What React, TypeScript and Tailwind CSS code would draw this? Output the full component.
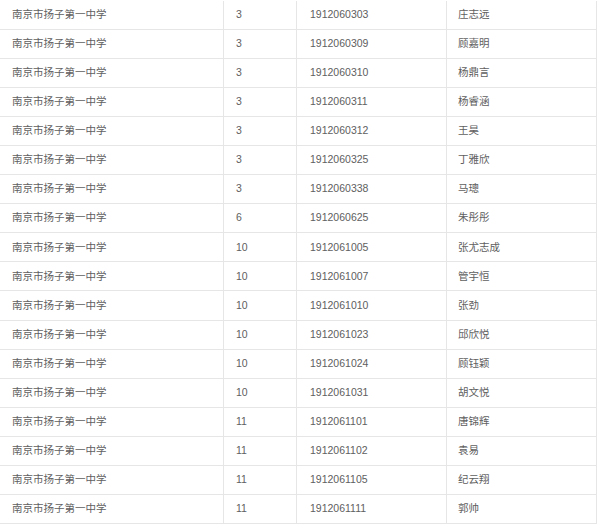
const rows: [string, string, string][] = [
	["3", "1912060303", "庄志远"],
	["3", "1912060309", "顾嘉明"],
	["3", "1912060310", "杨鼎言"],
	["3", "1912060311", "杨睿涵"],
	["3", "1912060312", "王昊"],
	["3", "1912060325", "丁雅欣"],
	["3", "1912060338", "马璁"],
	["6", "1912060625", "朱彤彤"],
	["10", "1912061005", "张尤志成"],
	["10", "1912061007", "管宇恒"],
	["10", "1912061010", "张劲"],
	["10", "1912061023", "邱欣悦"],
	["10", "1912061024", "顾钰颖"],
	["10", "1912061031", "胡文悦"],
	["11", "1912061101", "唐锦辉"],
	["11", "1912061102", "袁易"],
	["11", "1912061105", "纪云翔"],
	["11", "1912061111", "郭帅"],
];

export default function App() {
	return (
		<div
			className="h-[528px] w-[600px] overflow-hidden bg-white pt-px text-[10.5px] text-[#606060]"
			style={{ fontFamily: '"Liberation Sans", "Noto Sans CJK SC", sans-serif' }}
		>
			<div className="w-[597px] border-r border-[#e6e6e6]">
				{rows.map(([cls, id, name]) => (
					<div key={id} className="grid h-[29.06px] grid-cols-[224px_73px_150px_149px] border-b border-[#e6e6e6]">
						<div className="flex items-center border-r border-[#e6e6e6] pl-3">南京市扬子第一中学</div>
						<div className="flex items-center border-r border-[#e6e6e6] pl-3">{cls}</div>
						<div className="flex items-center border-r border-[#e6e6e6] pl-[13px]">{id}</div>
						<div className="flex items-center pl-[11px]">{name}</div>
					</div>
				))}
			</div>
		</div>
	);
}
